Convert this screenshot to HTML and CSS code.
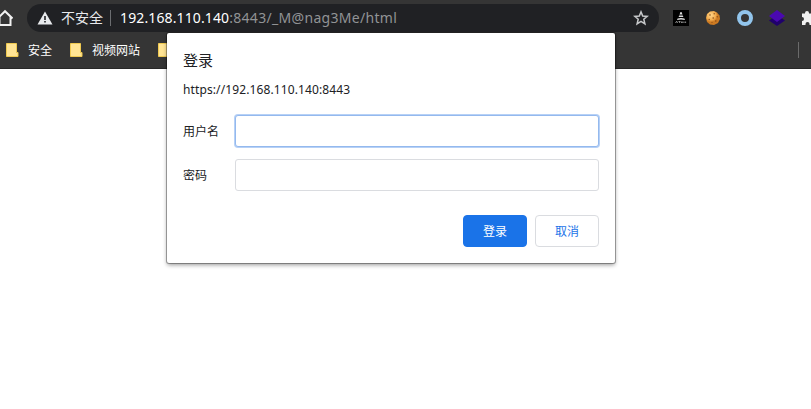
FILE: index.html
```html
<!DOCTYPE html>
<html lang="zh-CN">
<head>
<meta charset="utf-8">
<title>登录</title>
<link rel="stylesheet" href="styles.css">
</head>
<body>
<header class="chrome">
  <div class="toolbar">
    <svg class="home" width="13" height="18" viewBox="0 0 13 18"><path d="M-2.5 9.5 5 2.2 12.5 9.5M-.5 8V16H10.5V8" fill="none" stroke="#f1f1f1" stroke-width="2"/></svg>
    <div class="omnibox">
      <svg class="warn" width="16" height="14" viewBox="0 0 16 14"><path d="M8 .5 15.5 13.5H.5Z" fill="#e8eaed"/><path d="M7.2 5h1.6v4H7.2zM7.2 10h1.6v1.6H7.2z" fill="#202124"/></svg>
      <span class="insecure">不安全</span>
      <span class="sep"></span>
      <span class="url"><span class="host">192.168.110.140</span><span class="path">:8443/_M@nag3Me/html</span></span>
      <svg class="star" width="16" height="16" viewBox="0 0 16 16"><path d="M8 1.9 9.7 6.1 14.2 6.4 10.8 9.3 11.9 13.8 8 11.4 4.1 13.8 5.2 9.3 1.8 6.4 6.3 6.1Z" fill="none" stroke="#c6c8ca" stroke-width="1.5"/></svg>
    </div>
    <div class="extensions">
      <svg width="16" height="16" viewBox="0 0 16 16"><path d="M0 0h16v16H0z" fill="#000"/><path d="M7.5 2h1l1 2.6h-3zM6.2 5.5h3.6l.6 1.5H5.6zM4.6 8.6Q8 7.4 11.4 8.6L12 10Q8 8.8 4 10Z" fill="#ddd"/><path d="M2.5 13 3.7 11.2 4.6 13M5.5 11.5H7.5M6.6 11.5V13M8.5 11.5V13M9.7 11.5V13M11 11.5V13M12.6 11.5V13" fill="none" stroke="#aaa" stroke-width=".8"/></svg>
      <svg width="16" height="16" viewBox="0 0 16 16"><defs><radialGradient id="dough" cx=".35" cy=".3"><stop offset="0" stop-color="#ffd58a"/><stop offset=".65" stop-color="#f3ae50"/><stop offset="1" stop-color="#cc7a22"/></radialGradient></defs><path d="M5 1.5 9 1 12 2.5 14.5 5.5 15 9 13 13 9 15 5 14.5 2 12 1 8 2 4Z" fill="url(#dough)"/><g fill="#8a4b16"><circle cx="5" cy="5" r=".8"/><circle cx="9.2" cy="3.8" r=".7"/><circle cx="12.2" cy="6.7" r=".7"/><circle cx="8.2" cy="8" r=".8"/><circle cx="4.2" cy="9.5" r=".7"/><circle cx="10.8" cy="11" r=".8"/><circle cx="7" cy="12.3" r=".6"/></g></svg>
      <svg width="16" height="16" viewBox="0 0 16 16"><circle cx="8" cy="8" r="6" fill="none" stroke="#92c5ec" stroke-width="4"/></svg>
      <svg width="16" height="16" viewBox="0 0 16 16"><path d="M0 10.5 8 5l8 5.5L8 16Z" fill="#20006c"/><path d="M0 6 8 0l8 6-8 6Z" fill="#4a08b0"/></svg>
      <svg width="16" height="16" viewBox="0 0 16 16"><path d="M1 3.5H4V3a2 2 0 0 1 4 0v.5h4V7h1a2 2 0 0 1 0 4h-1v4H8.5v-1a2 2 0 0 0-4 0v1H1v-4a2 2 0 0 0 0-4Z" fill="#f1f1f1"/></svg>
    </div>
  </div>
  <nav class="bookmarks">
    <span class="bookmark"><svg class="folder" width="13" height="14" viewBox="0 0 13 14"><path d="M.5.5h10v9h1.5v4H.5Z" fill="#ffe494" stroke="#efc950"/></svg><span class="name">安全</span></span>
    <span class="bookmark"><svg class="folder" width="13" height="14" viewBox="0 0 13 14"><path d="M.5.5h10v9h1.5v4H.5Z" fill="#ffe494" stroke="#efc950"/></svg><span class="name">视频网站</span></span>
    <span class="bookmark"><svg class="folder" width="13" height="14" viewBox="0 0 13 14"><path d="M.5.5h10v9h1.5v4H.5Z" fill="#ffe494" stroke="#efc950"/></svg></span>
    <span class="bar-end"></span>
  </nav>
</header>
<form class="dialog">
  <h1>登录</h1>
  <p class="origin">https://192.168.110.140:8443</p>
  <label class="field"><span>用户名</span><input class="focused" type="text"></label>
  <label class="field"><span>密码</span><input type="password"></label>
  <div class="actions"><button class="primary" type="button">登录</button><button type="button">取消</button></div>
</form>
</body>
</html>
```
FILE: styles.css
```css
* { box-sizing: border-box; }
body {
  margin: 0;
  height: 409px;
  overflow: hidden;
  background: #fff;
  color: #202124;
  font: 12px/16px "Noto Sans", "Noto Sans CJK SC", sans-serif;
}
svg { display: block; flex: none; }
.chrome { height: 69px; background: #353535; border-bottom: 1px solid #282828; overflow: hidden; }
.toolbar { display: flex; height: 36px; width: 830px; align-items: center; }
.home { margin-right: 14px; }
.omnibox {
  display: flex;
  align-items: center;
  flex: none;
  width: 632px;
  height: 28px;
  padding: 0 10px;
  border-radius: 14px;
  background: #202124;
  color: #e8eaed;
  font-size: 14px;
  white-space: nowrap;
}
.insecure { margin-left: 8px; }
.sep { width: 1px; height: 16px; margin: 0 9px 0 7px; background: #6b6d70; }
.host { color: #fff; letter-spacing: .12px; }
.path { color: #919395; letter-spacing: .31px; }
.star { margin-left: auto; }
.extensions { display: flex; gap: 16px; margin-left: 14px; }
.bookmarks { display: flex; height: 28px; align-items: center; padding-left: 6px; color: #fff; }
.bookmark { display: flex; align-items: center; margin-right: 18px; }
.name { padding-top: 2px; }
.folder { margin-right: 9px; }
.bar-end { width: 1px; height: 16px; margin-left: auto; margin-right: 12px; background: #6b6b6b; }
.dialog {
  position: absolute;
  left: 167px;
  top: 33px;
  width: 448px;
  height: 230px;
  padding: 17px 16px 16px;
  border-radius: 2px;
  background: #fff;
  box-shadow: 0 0 0 1px #0000004d, 0 2px 4px #00000066;
}
h1 { margin: 0; font-size: 15px; line-height: 20px; font-weight: 400; }
.origin { margin: 12px 0 17px; letter-spacing: .11px; }
.field { display: flex; align-items: center; height: 32px; margin-bottom: 12px; }
.field span { width: 52px; padding-top: 2px; }
input { flex: 1; height: 32px; border: 1px solid #dadce0; border-radius: 3px; background: #fff; outline: 0; }
.focused { border-color: #94b9ee; box-shadow: 0 0 0 1px #b7d1f6; }
.actions { display: flex; justify-content: flex-end; gap: 8px; margin-top: 24px; }
button { width: 64px; height: 32px; padding: 2px 0 0; border: 1px solid #dadce0; border-radius: 4px; background: #fff; color: #1a73e8; font: inherit; }
.primary { border-color: #1a73e8; background: #1a73e8; color: #fff; }
```
